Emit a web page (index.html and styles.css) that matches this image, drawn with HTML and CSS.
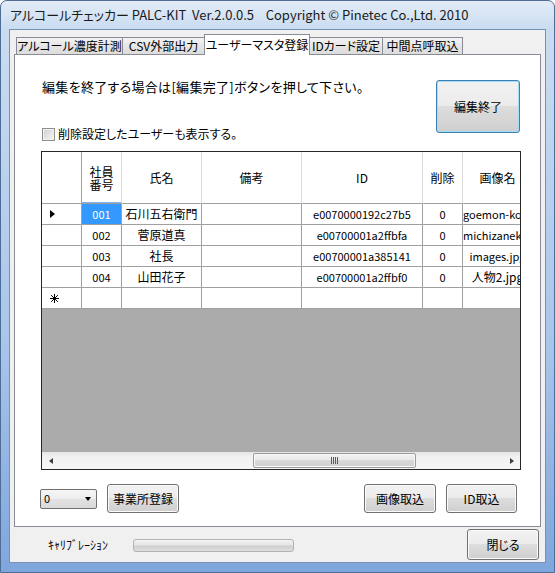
FILE: index.html
```html
<!DOCTYPE html>
<html lang="ja">
<head>
    <meta charset="UTF-8">
    <title>アルコールチェッカー PALC-KIT</title>
    <link rel="stylesheet" href="styles.css">
</head>
<body>
<div class="window">
    <div class="titlebar">アルコールチェッカー PALC-KIT  Ver.2.0.0.5    Copyright © Pinetec Co.,Ltd. 2010</div>
    <div class="client">
        <div class="tabs">
            <div class="tab w1">アルコール濃度計測</div>
            <div class="tab w2">CSV外部出力</div>
            <div class="tab w3 active">ユーザーマスタ登録</div>
            <div class="tab w4">IDカード設定</div>
            <div class="tab w5">中間点呼取込</div>
        </div>

        <div class="page">
            <div class="head">
                <div class="head-left">
                    <div class="hint">編集を終了する場合は[編集完了]ボタンを押して下さい。</div>
                    <label class="show-deleted"><span class="check"></span>削除設定したユーザーも表示する。</label>
                </div>
                <button class="btn btn-finish">編集終了</button>
            </div>

            <!-- user list -->
            <div class="grid">
                <div class="rows">
                    <div class="row header">
                        <div class="cell c-head"></div>
                        <div class="cell c-no sorted">社員<br>番号</div>
                        <div class="cell c-name">氏名</div>
                        <div class="cell c-note">備考</div>
                        <div class="cell c-id ascii">ID</div>
                        <div class="cell c-del">削除</div>
                        <div class="cell c-img">画像名</div>
                    </div>
                    <div class="row">
                        <div class="cell c-head"><span class="current"></span></div>
                        <div class="cell c-no ascii selected">001</div>
                        <div class="cell c-name">石川五右衛門</div>
                        <div class="cell c-note"></div>
                        <div class="cell c-id ascii">e0070000192c27b5</div>
                        <div class="cell c-del ascii">0</div>
                        <div class="cell c-img ascii">goemon-kohei.jpg</div>
                    </div>
                    <div class="row">
                        <div class="cell c-head"></div>
                        <div class="cell c-no ascii">002</div>
                        <div class="cell c-name">菅原道真</div>
                        <div class="cell c-note"></div>
                        <div class="cell c-id ascii">e00700001a2ffbfa</div>
                        <div class="cell c-del ascii">0</div>
                        <div class="cell c-img ascii">michizaneko.jpg</div>
                    </div>
                    <div class="row">
                        <div class="cell c-head"></div>
                        <div class="cell c-no ascii">003</div>
                        <div class="cell c-name">社長</div>
                        <div class="cell c-note"></div>
                        <div class="cell c-id ascii">e00700001a385141</div>
                        <div class="cell c-del ascii">0</div>
                        <div class="cell c-img ascii">images.jpg</div>
                    </div>
                    <div class="row">
                        <div class="cell c-head"></div>
                        <div class="cell c-no ascii">004</div>
                        <div class="cell c-name">山田花子</div>
                        <div class="cell c-note"></div>
                        <div class="cell c-id ascii">e00700001a2ffbf0</div>
                        <div class="cell c-del ascii">0</div>
                        <div class="cell c-img">人物2.jpg</div>
                    </div>
                    <div class="row">
                        <div class="cell c-head">
                            <svg class="new-row" width="9" height="9" viewBox="0 0 9 9">
                                <path d="M4.5 0v9M0 4.5h9M1.2 1.2l6.6 6.6M7.8 1.2l-6.6 6.6" stroke="#000" stroke-width="1"/>
                            </svg>
                        </div>
                        <div class="cell c-no"></div>
                        <div class="cell c-name"></div>
                        <div class="cell c-note"></div>
                        <div class="cell c-id"></div>
                        <div class="cell c-del"></div>
                        <div class="cell c-img"></div>
                    </div>
                </div>
                <div class="hscroll">
                    <div class="arrow"><span class="tri-left"></span></div>
                    <div class="thumb">
                        <svg width="7" height="7" viewBox="0 0 7 7">
                            <path d="M0.5 0v7M2.5 0v7M4.5 0v7M6.5 0v7" stroke="#5a5a5a" stroke-width="1"/>
                        </svg>
                    </div>
                    <div class="arrow right"><span class="tri-right"></span></div>
                </div>
            </div>

            <div class="tools">
                <div class="combo"><span class="ascii">0</span><span class="tri-down"></span></div>
                <button class="btn btn-office">事業所登録</button>
                <button class="btn btn-image">画像取込</button>
                <button class="btn btn-id">ID取込</button>
            </div>
        </div>

        <div class="status">
            <span class="calib">ｷｬﾘﾌﾞﾚｰｼｮﾝ</span>
            <div class="progress"></div>
            <button class="btn btn-close">閉じる</button>
        </div>
    </div>
</div>
</body>
</html>
```

FILE: styles.css
```css
body {
    margin: 0;
    font: 12px/1.3 "Noto Sans CJK JP", sans-serif;
    font-feature-settings: "palt";
    color: #000;
    background: #fff;
}

/* window frame */
.window {
    width: 555px;
    height: 573px;
    box-sizing: border-box;
    display: flex;
    flex-direction: column;
    padding: 0 8px 9px;
    border: 1px solid #4d6d96;
    border-radius: 7px 7px 0 0;
    background: linear-gradient(#e2ecf7 0, #cadcf1 28px, #a9c5ea 60%, #7fa6dc 100%);
}
.titlebar {
    height: 28px;
    line-height: 28px;
    padding-left: 1px;
    white-space: pre;
    font-size: 13px;
    color: #1a1a1a;
}
.client {
    flex: 1;
    display: flex;
    flex-direction: column;
    border: 1px solid #7891b3;
    background: #f0f0f0;
}

/* tab strip */
.tabs {
    height: 24px;
    display: flex;
    align-items: flex-end;
    padding-left: 6px;
}
.tab {
    height: 17px;
    box-sizing: border-box;
    border: 1px solid #898c95;
    border-bottom: none;
    margin-right: -1px;
    background: linear-gradient(#f3f3f3, #e6e6e6 50%, #dcdcdc);
    text-align: center;
    line-height: 15px;
    white-space: nowrap;
}
.tab.active {
    position: relative;
    z-index: 1;
    height: 21px;
    margin-bottom: -1px;
    line-height: 19px;
    background: #fff;
}
.w1 { width: 107px; }
.w2 { width: 83px; }
.w3 { width: 106px; }
.w4 { width: 74px; }
.w5 { width: 81px; }

.page {
    margin: 0 4px;
    height: 473px;
    box-sizing: border-box;
    border: 1px solid #898c95;
    background: #fff;
}

/* top of the page */
.head {
    display: flex;
    justify-content: space-between;
    align-items: flex-start;
    padding: 24px 20px 0 27px;
}
.hint {
    font-size: 13px;
    line-height: 16px;
    letter-spacing: 0.3px;
}
.show-deleted {
    display: flex;
    align-items: center;
    margin-top: 31px;
    line-height: 16px;
}
.check {
    width: 13px;
    height: 13px;
    box-sizing: border-box;
    margin-right: 3px;
    border: 1px solid #8f8f8f;
    background: linear-gradient(135deg, #cfcfcf, #f7f7f7);
    box-shadow: inset 0 0 0 1px #f2f2f2;
}

.btn {
    box-sizing: border-box;
    padding: 0;
    font: inherit;
    color: #000;
    border: 1px solid #707070;
    border-radius: 3px;
    background: linear-gradient(#f2f2f2 0, #ebebeb 50%, #dddddd 50%, #cfcfcf 100%);
    box-shadow: inset 0 0 0 1px #fbfbfb;
}
.btn-finish {
    width: 84px;
    height: 53px;
    margin-top: 1px;
    border-color: #3c7fb1;
    box-shadow: inset 0 0 0 1px #a6dcf6;
}

/* data grid */
.grid {
    margin: 9px 0 0 26px;
    width: 480px;
    height: 319px;
    box-sizing: border-box;
    display: flex;
    flex-direction: column;
    border: 1px solid #262626;
    background: #ababab;
    overflow: hidden;
}
.rows {
    flex: 1;
    overflow: hidden;
}
.row {
    display: flex;
    height: 21px;
    background: #fff;
}
.cell {
    flex: none;
    box-sizing: border-box;
    border-right: 1px solid #a0a0a0;
    border-bottom: 1px solid #a0a0a0;
    text-align: center;
    line-height: 20px;
    white-space: nowrap;
    overflow: hidden;
}
.ascii { font-size: 11px; }
.c-head { width: 40px; }
.c-no { width: 40px; }
.c-name { width: 80px; }
.c-note { width: 100px; }
.c-id { width: 121px; }
.c-del { width: 40px; }
.c-img { width: 70px; }

.row.header { height: 52px; }
.header .cell {
    display: flex;
    align-items: center;
    justify-content: center;
    line-height: 13px;
    border-right-color: #dcdcdc;
    border-bottom-color: #a0a0a0;
}
.header .c-head { border-right-color: #a0a0a0; }
.header .ascii { font-size: 12px; }
.header .sorted { box-shadow: inset 0 -1px 0 #7db2e8; }

.selected {
    background: #3399ff;
    color: #fff;
}
.row .c-head {
    display: flex;
    align-items: center;
    padding-left: 8px;
}
.current {
    width: 0;
    height: 0;
    border-left: 5px solid #000;
    border-top: 4px solid transparent;
    border-bottom: 4px solid transparent;
}

/* horizontal scroll bar */
.hscroll {
    flex: none;
    height: 17px;
    display: flex;
    align-items: stretch;
    background: linear-gradient(#e4e4e4, #f1f1f1 30%, #f6f6f6);
}
.arrow {
    width: 17px;
    display: flex;
    align-items: center;
    justify-content: center;
}
.arrow.right { margin-left: auto; }
.tri-left {
    border-right: 4px solid #3c3c3c;
    border-top: 3px solid transparent;
    border-bottom: 3px solid transparent;
}
.tri-right {
    border-left: 4px solid #3c3c3c;
    border-top: 3px solid transparent;
    border-bottom: 3px solid transparent;
}
.thumb {
    width: 163px;
    margin: 1px 0 1px 194px;
    box-sizing: border-box;
    display: flex;
    align-items: center;
    justify-content: center;
    border: 1px solid #9a9a9a;
    border-radius: 2px;
    background: linear-gradient(#f3f3f3, #e8e8e8 50%, #d8d8d8 50%, #d2d2d2);
    box-shadow: inset 0 0 0 1px #fafafa;
}

/* bottom buttons */
.tools {
    display: flex;
    align-items: center;
    padding: 14px 23px 0 25px;
}
.tools .btn { height: 29px; }
.combo {
    width: 57px;
    height: 20px;
    box-sizing: border-box;
    display: flex;
    align-items: center;
    justify-content: space-between;
    padding: 0 5px 0 3px;
    border: 1px solid #707070;
    border-radius: 2px;
    background: linear-gradient(#f6f6f6, #ededed 50%, #e2e2e2 50%, #dadada);
}
.tri-down {
    border-top: 4px solid #000;
    border-left: 3.5px solid transparent;
    border-right: 3.5px solid transparent;
}
.btn-office { width: 72px; margin-left: 10px; }
.btn-image { width: 72px; margin-left: auto; }
.btn-id { width: 71px; margin-left: 10px; }

/* status row */
.status {
    flex: 1;
    display: flex;
    align-items: flex-start;
    padding: 2px 6px 0 38px;
}
.calib {
    width: 85px;
    margin-top: 8px;
    line-height: 16px;
    font-size: 12px;
}
.progress {
    width: 161px;
    height: 13px;
    margin-top: 10px;
    box-sizing: border-box;
    border: 1px solid #b2b2b2;
    border-radius: 3px;
    background: linear-gradient(#f4f4f4, #e4e4e4 45%, #cfcfcf 55%, #dedede);
}
.btn-close {
    width: 72px;
    height: 31px;
    margin-left: auto;
}
```
